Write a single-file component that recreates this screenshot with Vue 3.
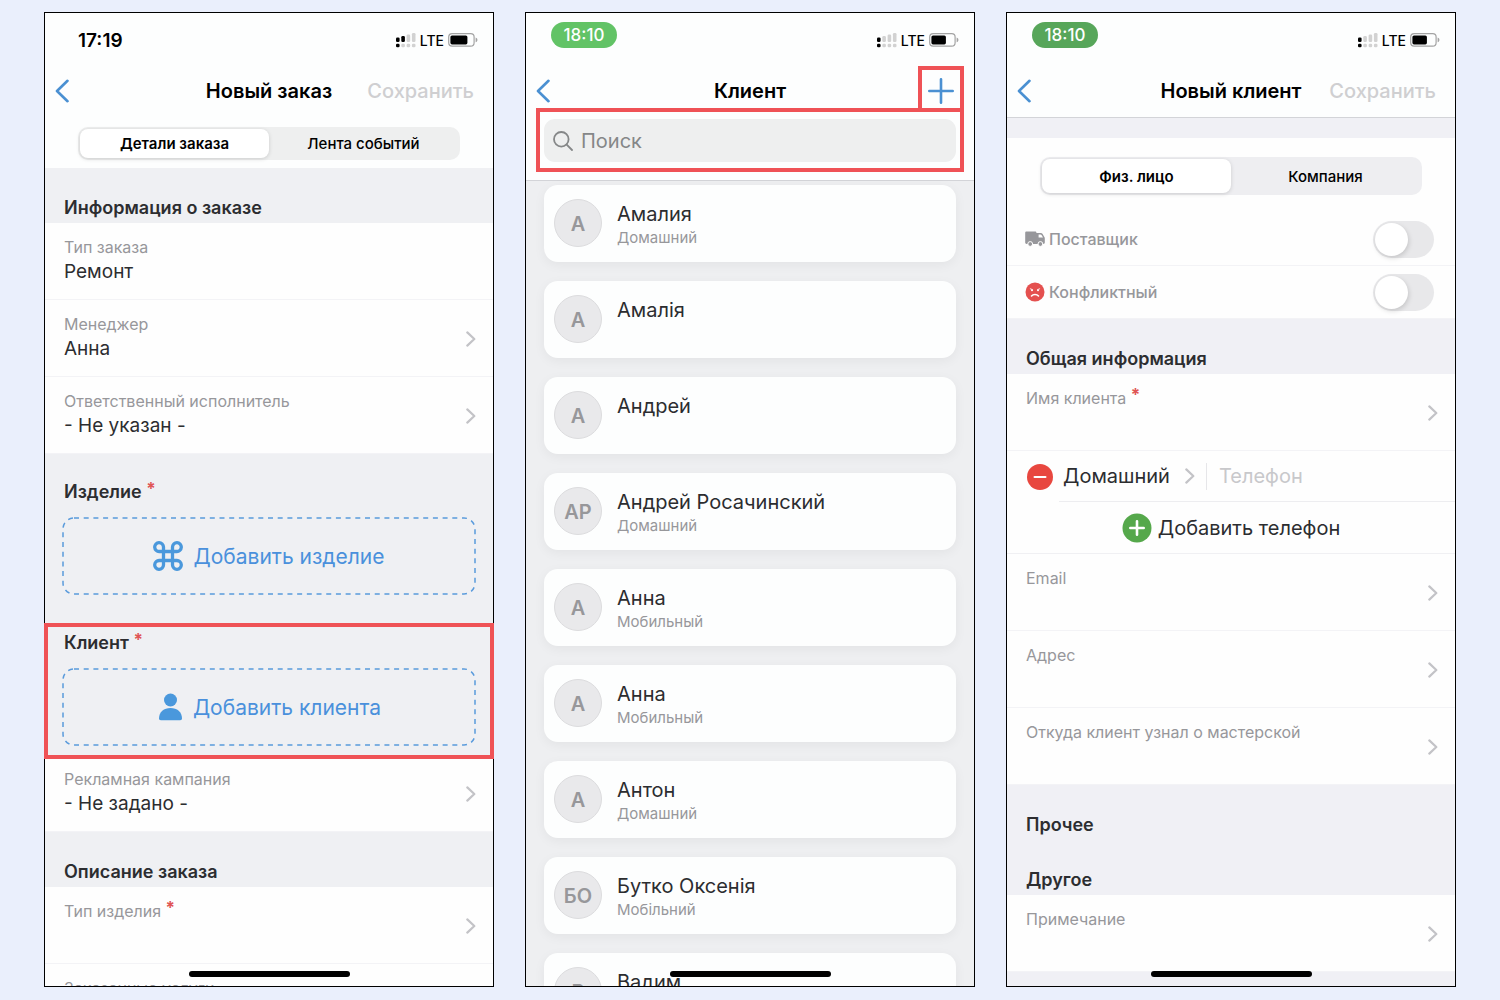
<template>
  <main class="page">
    <!-- New order -->
    <section class="phone order">
      <header class="header">
        <div class="status">
          <span class="time">17:19</span>
          <div class="indicators">
            <svg width="20" height="15" viewBox="0 0 20 15">
              <rect v-for="b in bars" :key="b.x" :x="b.x" :y="b.y" width="3.6" :height="b.h" rx="1.3" :fill="b.x < 6 ? '#000' : '#d2d2d2'" />
              <rect v-for="b in bars" :key="'d' + b.x" :x="b.x" y="10.8" width="3.6" height="3.4" rx="1.3" :fill="b.x < 1 ? '#000' : '#d2d2d2'" />
            </svg>
            <span class="lte">LTE</span>
            <svg width="30" height="14" viewBox="0 0 30 14">
              <rect x="0.7" y="0.7" width="25.4" height="12.4" rx="3.4" fill="none" stroke="#a3a3a3" stroke-width="1.2" />
              <rect x="2.4" y="2.4" width="17" height="9" rx="1.6" fill="#000" />
              <path d="M27.6 4.6c1.3.4 1.8 1.3 1.8 2.3s-.5 1.9-1.8 2.3z" fill="#a3a3a3" />
            </svg>
          </div>
        </div>
        <nav class="nav">
          <button class="back" aria-label="Назад">
            <svg width="14" height="24" viewBox="0 0 14 24"><path d="M12.500 1.800 2 12l10.500 10.200" /></svg>
          </button>
          <h1>Новый заказ</h1>
          <button class="save" disabled>Сохранить</button>
        </nav>
        <div class="segment">
          <button class="active">Детали заказа</button>
          <button>Лента событий</button>
        </div>
      </header>

      <h2>Информация о заказе</h2>
      <div class="rows">
        <div class="row">
          <span class="label">Тип заказа</span>
          <span class="value">Ремонт</span>
        </div>
        <button v-for="r in orderRows" :key="r.label" class="row">
          <span class="label">{{ r.label }}</span>
          <span class="value">{{ r.value }}</span>
          <svg class="chevron" width="10" height="16" viewBox="0 0 10 16"><path d="M1.300 1.400 8.300 8l-7 6.600" /></svg>
        </button>
      </div>

      <div class="adders">
        <div class="adder">
          <h3>Изделие <sup>*</sup></h3>
          <button class="dashed">
            <svg class="outline" width="100%" height="100%"><rect x="1" y="1" /></svg>
            <svg width="30" height="30" viewBox="0 0 30 30" fill="none" stroke="#4a98dc" stroke-width="3.3">
              <path d="M10.500 10.500h9v9h-9zM10.500 10.500H6.300a4.400 4.400 0 1 1 4.200-4.500zM19.500 10.500V6a4.400 4.400 0 1 1 4.200 4.500zM19.500 19.500h4.200a4.400 4.400 0 1 1-4.200 4.500zM10.500 19.500V24a4.400 4.400 0 1 1-4.200-4.500z" />
            </svg>
            Добавить изделие
          </button>
        </div>
        <div class="adder">
          <h3>Клиент <sup>*</sup></h3>
          <button class="dashed">
            <svg class="outline" width="100%" height="100%"><rect x="1" y="1" /></svg>
            <svg width="26" height="28" viewBox="0 0 26 28" fill="#4a98dc">
              <circle cx="13.500" cy="7" r="6.500" />
              <path d="M2 25.500C2 19 7 15 13.500 15S25 19 25 25.500c0 1.100-.8 1.700-1.800 1.700H3.800C2.800 27.200 2 26.600 2 25.500z" />
            </svg>
            Добавить клиента
          </button>
          <span class="mark"></span>
        </div>
      </div>

      <div class="rows">
        <button class="row">
          <span class="label">Рекламная кампания</span>
          <span class="value">- Не задано -</span>
          <svg class="chevron" width="10" height="16" viewBox="0 0 10 16"><path d="M1.300 1.400 8.300 8l-7 6.600" /></svg>
        </button>
      </div>
      <h2>Описание заказа</h2>
      <div class="rows">
        <button class="row">
          <span class="label">Тип изделия <sup>*</sup></span>
          <svg class="chevron" width="10" height="16" viewBox="0 0 10 16"><path d="M1.300 1.400 8.300 8l-7 6.600" /></svg>
        </button>
        <button class="row">
          <span class="label">Заказанные услуги</span>
        </button>
      </div>
      <span class="home"></span>
    </section>

    <!-- Client list -->
    <section class="phone clients">
      <header class="header lined">
        <div class="status">
          <span class="pill">18:10</span>
          <div class="indicators">
            <svg width="20" height="15" viewBox="0 0 20 15">
              <rect v-for="b in bars" :key="b.x" :x="b.x" :y="b.y" width="3.6" :height="b.h" rx="1.3" :fill="b.x < 1 ? '#000' : '#d2d2d2'" />
              <rect v-for="b in bars" :key="'d' + b.x" :x="b.x" y="10.8" width="3.6" height="3.4" rx="1.3" :fill="b.x < 1 ? '#000' : '#d2d2d2'" />
            </svg>
            <span class="lte">LTE</span>
            <svg width="30" height="14" viewBox="0 0 30 14">
              <rect x="0.7" y="0.7" width="25.4" height="12.4" rx="3.4" fill="none" stroke="#a3a3a3" stroke-width="1.2" />
              <rect x="2.4" y="2.4" width="14.5" height="9" rx="1.6" fill="#000" />
              <path d="M27.6 4.6c1.3.4 1.8 1.3 1.8 2.3s-.5 1.9-1.8 2.3z" fill="#a3a3a3" />
            </svg>
          </div>
        </div>
        <nav class="nav">
          <button class="back" aria-label="Назад">
            <svg width="14" height="24" viewBox="0 0 14 24"><path d="M12.500 1.800 2 12l10.500 10.200" /></svg>
          </button>
          <h1>Клиент</h1>
          <button class="plus" aria-label="Добавить">
            <svg width="26" height="26" viewBox="0 0 26 26"><path d="M13 1.300v23.400M1.300 13h23.400" /></svg>
            <span class="mark"></span>
          </button>
        </nav>
        <label class="search">
          <svg width="20" height="20" viewBox="0 0 20 20" fill="none" stroke="#858788" stroke-width="1.8" stroke-linecap="round">
            <circle cx="8.300" cy="8.300" r="7.300" />
            <path d="m13.700 13.700 5.300 5.300" />
          </svg>
          <input v-model="query" type="text" placeholder="Поиск" aria-label="Поиск" />
          <span class="mark"></span>
        </label>
      </header>
      <ul class="list">
        <li v-for="(c, i) in clients" :key="i" class="card">
          <span class="avatar">{{ c.initials }}</span>
          <div>
            <p class="name">{{ c.name }}</p>
            <p v-if="c.kind" class="kind">{{ c.kind }}</p>
          </div>
        </li>
      </ul>
      <span class="home"></span>
    </section>

    <!-- New client -->
    <section class="phone client">
      <header class="header lined">
        <div class="status">
          <span class="pill dark">18:10</span>
          <div class="indicators">
            <svg width="20" height="15" viewBox="0 0 20 15">
              <rect v-for="b in bars" :key="b.x" :x="b.x" :y="b.y" width="3.6" :height="b.h" rx="1.3" :fill="b.x < 1 ? '#000' : '#d2d2d2'" />
              <rect v-for="b in bars" :key="'d' + b.x" :x="b.x" y="10.8" width="3.6" height="3.4" rx="1.3" :fill="b.x < 1 ? '#000' : '#d2d2d2'" />
            </svg>
            <span class="lte">LTE</span>
            <svg width="30" height="14" viewBox="0 0 30 14">
              <rect x="0.7" y="0.7" width="25.4" height="12.4" rx="3.4" fill="none" stroke="#a3a3a3" stroke-width="1.2" />
              <rect x="2.4" y="2.4" width="14.5" height="9" rx="1.6" fill="#000" />
              <path d="M27.6 4.6c1.3.4 1.8 1.3 1.8 2.3s-.5 1.9-1.8 2.3z" fill="#a3a3a3" />
            </svg>
          </div>
        </div>
        <nav class="nav">
          <button class="back" aria-label="Назад">
            <svg width="14" height="24" viewBox="0 0 14 24"><path d="M12.500 1.800 2 12l10.500 10.200" /></svg>
          </button>
          <h1>Новый клиент</h1>
          <button class="save" disabled>Сохранить</button>
        </nav>
      </header>

      <div class="kinds">
        <div class="segment tall">
          <button class="active">Физ. лицо</button>
          <button>Компания</button>
        </div>
        <label class="toggle">
          <svg width="20" height="16" viewBox="0 0 20 16" fill="#97979b">
            <path d="M1.600 0.400h8.400c.9 0 1.400.5 1.400 1.400V13H1.600C.7 13 .2 12.500.2 11.600V1.800C.2.900.7.4 1.600.4z" />
            <path fill-rule="evenodd" d="M11 2h4.800c.8 0 1.400.3 1.800 1l1.600 2.700c.4.600.6 1.100.6 1.800v4.100c0 .9-.5 1.400-1.400 1.400H11zM13.600 3.400v3.200h4.400l-1.500-2.600c-.3-.4-.5-.6-1-.6z" />
            <g stroke="#fff" stroke-width="1">
              <circle cx="5.200" cy="13" r="2.400" />
              <circle cx="15.400" cy="13" r="2.400" />
            </g>
          </svg>
          Поставщик
          <input v-model="supplier" type="checkbox" />
        </label>
        <label class="toggle">
          <svg width="20" height="20" viewBox="0 0 20 20">
            <circle cx="10" cy="10" r="9.500" fill="#e4504f" />
            <path d="M5.300 6.800 7.300 7.500M14.700 6.800 12.700 7.500" fill="none" stroke="#fff" stroke-width="0.8" stroke-linecap="round" />
            <path d="M6.500 14c1.700-2 5.300-2 7 0" fill="none" stroke="#fff" stroke-width="1.600" stroke-linecap="round" />
            <circle cx="7" cy="8.300" r="1" fill="#fff" />
            <circle cx="13" cy="8.300" r="1" fill="#fff" />
          </svg>
          Конфликтный
          <input v-model="conflict" type="checkbox" />
        </label>
      </div>

      <h2>Общая информация</h2>
      <div class="rows">
        <button class="row">
          <span class="label">Имя клиента <sup>*</sup></span>
          <svg class="chevron" width="10" height="16" viewBox="0 0 10 16"><path d="M1.300 1.400 8.300 8l-7 6.600" /></svg>
        </button>
        <div class="number">
          <button aria-label="Удалить">
            <svg width="26" height="26" viewBox="0 0 26 26">
              <circle cx="13" cy="13" r="13" fill="#e8473f" />
              <path d="M7.500 13h11" stroke="#fff" stroke-width="2" stroke-linecap="round" />
            </svg>
          </button>
          <div class="number-body">
            <button class="number-kind">
              Домашний
              <svg class="chevron" width="10" height="16" viewBox="0 0 10 16"><path d="M1.300 1.400 8.300 8l-7 6.600" /></svg>
            </button>
            <input v-model="phone" type="tel" placeholder="Телефон" aria-label="Телефон" />
          </div>
        </div>
        <button class="add-number">
          <svg width="30" height="30" viewBox="0 0 30 30">
            <circle cx="15" cy="15" r="14.500" fill="#55a84b" />
            <path d="M15 8.300v13.400M8.300 15h13.400" stroke="#fff" stroke-width="2.600" stroke-linecap="round" />
          </svg>
          Добавить телефон
        </button>
        <button v-for="label in clientRows" :key="label" class="row">
          <span class="label">{{ label }}</span>
          <svg class="chevron" width="10" height="16" viewBox="0 0 10 16"><path d="M1.300 1.400 8.300 8l-7 6.600" /></svg>
        </button>
      </div>
      <h2>Прочее</h2>
      <h2>Другое</h2>
      <div class="rows">
        <button class="row">
          <span class="label">Примечание</span>
          <svg class="chevron" width="10" height="16" viewBox="0 0 10 16"><path d="M1.300 1.400 8.300 8l-7 6.600" /></svg>
        </button>
      </div>
      <span class="home"></span>
    </section>
  </main>
</template>

<script setup>
import { ref } from "vue";

const query = ref("");
const phone = ref("");
const supplier = ref(false);
const conflict = ref(false);

const bars = [
  { x: 0, y: 4.4, h: 4.6 },
  { x: 5.3, y: 3, h: 6 },
  { x: 10.6, y: 1.5, h: 7.5 },
  { x: 15.9, y: 0, h: 9 },
];

const orderRows = [
  { label: "Менеджер", value: "Анна" },
  { label: "Ответственный исполнитель", value: "- Не указан -" },
];

const clients = [
  { initials: "А", name: "Амалия", kind: "Домашний" },
  { initials: "А", name: "Амалія", kind: "" },
  { initials: "А", name: "Андрей", kind: "" },
  { initials: "АР", name: "Андрей Росачинский", kind: "Домашний" },
  { initials: "А", name: "Анна", kind: "Мобильный" },
  { initials: "А", name: "Анна", kind: "Мобильный" },
  { initials: "А", name: "Антон", kind: "Домашний" },
  { initials: "БО", name: "Бутко Оксенія", kind: "Мобільний" },
  { initials: "В", name: "Вадим", kind: "" },
];

const clientRows = ["Email", "Адрес", "Откуда клиент узнал о мастерской"];
</script>

<style>
body {
  margin: 0;
  background: #eaeffc;
}
</style>

<style scoped>
.page {
  display: grid;
  grid-template-columns: repeat(3, 1fr);
  gap: 31px;
  box-sizing: border-box;
  height: 100vh;
  padding: 12px 44px 13px;
  font-family: Inter, "Liberation Sans", sans-serif;
  color: #2c2d30;
}

button,
input {
  margin: 0;
  padding: 0;
  border: none;
  background: none;
  font: inherit;
  color: inherit;
}

button {
  cursor: pointer;
}

h1,
h2,
h3,
p,
ul {
  margin: 0;
  padding: 0;
}

svg {
  display: block;
  flex-shrink: 0;
}

.phone {
  position: relative;
  display: flex;
  flex-direction: column;
  padding: 1px;
  overflow: hidden;
  background: #eff0f3;
}

.phone::after {
  content: "";
  position: absolute;
  inset: 0;
  border: 1px solid #000;
  pointer-events: none;
}

.phone > * {
  flex-shrink: 0;
}

.clients {
  background: #eeeff1;
}

.client {
  background: #f0f0f5;
}

.header {
  background: #fdfefe;
}

.order .header {
  padding-bottom: 8px;
}

.client .header {
  padding-bottom: 2px;
}

.clients .header {
  padding-bottom: 18px;
}

.lined {
  border-bottom: 1px solid #d3d4d8;
}

.status {
  display: flex;
  align-items: center;
  justify-content: space-between;
  height: 54px;
  padding: 0 15px 0 25px;
}

.time {
  margin-left: 8px;
  color: #000;
  font-size: 19px;
  font-weight: 600;
}

.pill {
  align-self: flex-start;
  width: 66px;
  margin-top: 9px;
  border-radius: 13px;
  background: #62c366;
  color: #fff;
  font-size: 17px;
  font-weight: 500;
  line-height: 26px;
  text-align: center;
}

.pill.dark {
  background: #57a65a;
}

.indicators {
  display: flex;
  align-items: center;
  gap: 4px;
  color: #000;
}

.lte {
  font-size: 14px;
  font-weight: 500;
}

.nav {
  display: grid;
  grid-template-columns: 1fr auto 1fr;
  align-items: center;
  height: 48px;
}

h1 {
  color: #000;
  font-size: 20px;
  font-weight: 600;
  line-height: 24px;
}

.back {
  justify-self: start;
  margin-left: 10px;
}

.back path,
.plus path {
  fill: none;
  stroke: #4a90d2;
  stroke-width: 2.6;
  stroke-linecap: round;
  stroke-linejoin: round;
}

.save {
  justify-self: end;
  margin-right: 19px;
  color: #cfcfd1;
  font-size: 20px;
  font-weight: 500;
}

.plus {
  position: relative;
  justify-self: end;
  margin-right: 20px;
}

.mark {
  position: absolute;
  z-index: 2;
  border: 4px solid #ef5256;
  pointer-events: none;
}

.plus .mark {
  inset: -12px -10px -8px;
}

.search .mark {
  inset: -11px -8px -10px;
}

.adder .mark {
  inset: 0 -1px -4px;
}

.segment {
  display: grid;
  grid-template-columns: 1fr 1fr;
  height: 29px;
  margin: 12px 33px 0;
  padding: 2px;
  border-radius: 10px;
  background: #eeefef;
  color: #000;
  font-size: 15px;
  font-weight: 500;
}

.segment .active {
  border-radius: 8px;
  background: #fff;
  box-shadow: 0 1px 4px rgba(0, 0, 0, 0.15);
  font-weight: 600;
}

.segment.tall {
  height: 34px;
  margin: 0 33px;
  background: #eeeef1;
}

h2 {
  padding: 28px 19px 3px;
  font-size: 18px;
  font-weight: 600;
  line-height: 24px;
}

.rows {
  display: flex;
  flex-direction: column;
  background: #fefefe;
}

.row {
  position: relative;
  display: flex;
  flex-direction: column;
  align-items: flex-start;
  box-sizing: border-box;
  min-height: 77px;
  padding: 14px 19px 0;
  border-bottom: 1px solid #f3f3f6;
  text-align: left;
}

.label {
  color: #97979b;
  font-size: 16px;
  line-height: 20px;
}

.value {
  margin-top: 3px;
  font-size: 19px;
  line-height: 24px;
}

.chevron {
  fill: none;
  stroke: #c3c3c7;
  stroke-width: 2.2;
  stroke-linecap: round;
  stroke-linejoin: round;
}

.row .chevron {
  position: absolute;
  top: 31px;
  right: 17px;
}

sup {
  color: #e05555;
  font-weight: 700;
  font-size: 17px;
  line-height: 0;
  vertical-align: 3px;
}

.adders {
  display: flex;
  flex-direction: column;
  gap: 19px;
  padding-top: 18px;
}

.adder {
  position: relative;
  padding: 8px 17px 9px;
}

h3 {
  padding-left: 2px;
  font-size: 18px;
  font-weight: 600;
  line-height: 24px;
}

.dashed {
  position: relative;
  display: flex;
  align-items: center;
  justify-content: center;
  gap: 10px;
  width: 100%;
  height: 78px;
  margin-top: 13px;
  color: #4a90dc;
  font-size: 21px;
}

.outline {
  position: absolute;
  inset: 0;
}

.outline rect {
  width: calc(100% - 2px);
  height: calc(100% - 2px);
  rx: 11px;
  fill: none;
  stroke: #5a9bdc;
  stroke-width: 1.5;
  stroke-dasharray: 5 4.7;
}

.home {
  position: absolute;
  z-index: 1;
  bottom: 10px;
  left: 50%;
  width: 161px;
  height: 6px;
  margin-left: -80px;
  border-radius: 3px;
  background: #000;
}

.search {
  position: relative;
  display: flex;
  align-items: center;
  gap: 8px;
  height: 43px;
  margin: 4px 18px 0;
  padding: 0 9px;
  border-radius: 11px;
  background: #eeefef;
}

.search input {
  flex: 1;
  min-width: 0;
  font-size: 20px;
  outline: none;
}

.search input::placeholder {
  color: #858788;
}

.list {
  display: flex;
  flex-direction: column;
  gap: 19px;
  padding: 4px 18px 0;
  list-style: none;
}

.card {
  display: flex;
  gap: 15px;
  box-sizing: border-box;
  height: 77px;
  padding: 14px 10px;
  border-radius: 14px;
  background: #fdfefe;
  box-shadow: 0 3px 12px rgba(0, 0, 0, 0.05);
}

.avatar {
  box-sizing: border-box;
  width: 48px;
  height: 48px;
  border: 1px solid #dcdcde;
  border-radius: 50%;
  background: #e9e9eb;
  color: #97979a;
  font-size: 20px;
  font-weight: 600;
  line-height: 48px;
  text-align: center;
}

.name {
  margin-top: 3px;
  font-size: 20px;
  line-height: 24px;
}

.kind {
  color: #97979b;
  font-size: 15px;
  line-height: 24px;
}

.kinds {
  margin-top: 20px;
  padding-top: 19px;
  background: #fefefe;
}

.toggle {
  display: flex;
  align-items: center;
  gap: 4px;
  height: 52px;
  padding: 0 21px 0 18px;
  border-bottom: 1px solid #f3f3f6;
  color: #97979b;
  font-size: 16px;
  font-weight: 500;
}

.segment.tall + .toggle {
  margin-top: 18px;
}

.toggle input {
  appearance: none;
  width: 61px;
  height: 37px;
  margin-left: auto;
  padding: 2px;
  box-sizing: border-box;
  border-radius: 19px;
  background: #e8e8ea;
}

.toggle input::before {
  content: "";
  display: block;
  width: 33px;
  height: 33px;
  border-radius: 50%;
  background: #fff;
  box-shadow: 1px 2px 5px rgba(0, 0, 0, 0.15);
}

.toggle input:checked::before {
  margin-left: auto;
}

.number {
  display: flex;
  align-items: center;
  gap: 6px;
  padding-left: 20px;
  font-size: 20px;
}

.number-body {
  display: flex;
  flex: 1;
  align-items: center;
  min-width: 0;
  height: 50px;
  padding-left: 4px;
  border-bottom: 1px solid #ededf0;
}

.number-kind {
  display: flex;
  align-items: center;
  gap: 15px;
  padding-right: 11px;
}

.number input {
  flex: 1;
  min-width: 0;
  height: 27px;
  padding-left: 12px;
  border-left: 1px solid #e6e6e9;
  outline: none;
}

.number input::placeholder {
  color: #c8c8cb;
}

.add-number {
  display: flex;
  align-items: center;
  justify-content: center;
  gap: 6px;
  height: 52px;
  border-bottom: 1px solid #f0f0f3;
  font-size: 20px;
}
</style>
